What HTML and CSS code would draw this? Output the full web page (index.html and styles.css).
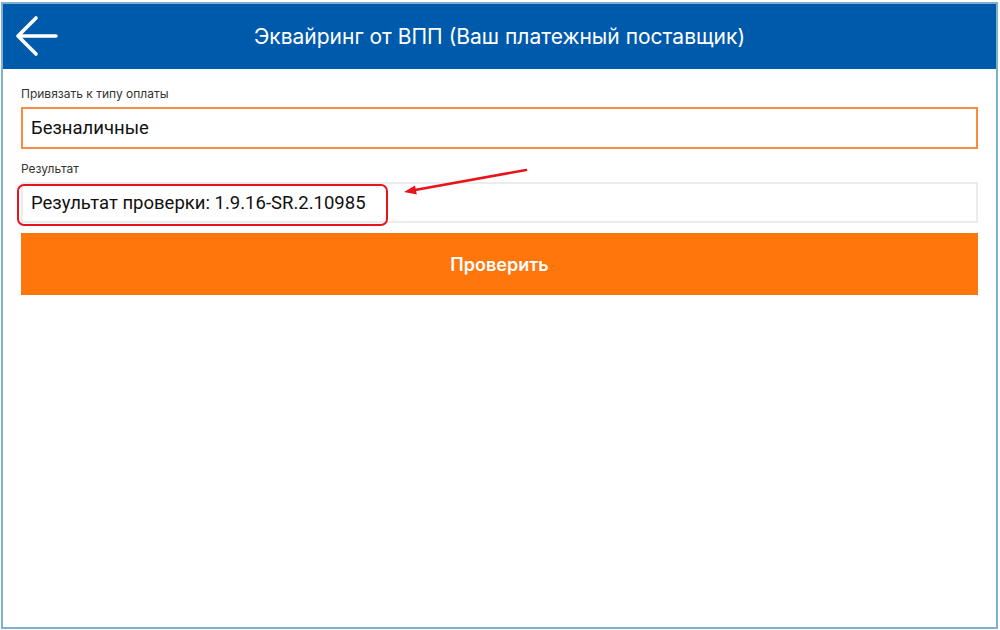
FILE: index.html
```html
<!DOCTYPE html>
<html lang="ru">
<head>
    <meta charset="UTF-8">
    <meta name="viewport" content="width=device-width, initial-scale=1.0">
    <title>Эквайринг от ВПП</title>
    <link rel="stylesheet" href="styles.css">
</head>
<body>

<div class="screen">
    <header class="topbar">
        <button class="back-btn" aria-label="Назад">
            <svg width="44" height="44" viewBox="0 0 44 44">
                <path d="M41 21H4M21 3L3 21L21 39" fill="none" stroke="#ffffff" stroke-width="3.6" stroke-linecap="round" stroke-linejoin="round"/>
            </svg>
        </button>
        <h1 class="topbar-title">Эквайринг от ВПП (Ваш платежный поставщик)</h1>
    </header>

    <main class="content">
        <label class="field-label" for="payType">Привязать к типу оплаты</label>
        <div class="field field-active" id="payType">Безналичные</div>

        <label class="field-label field-label-second" for="result">Результат</label>
        <div class="result-wrap">
            <div class="field field-plain" id="result">Результат проверки: 1.9.16-SR.2.10985</div>

            <!-- annotation over the result -->
            <div class="mark-box"></div>
            <svg class="mark-arrow" width="135" height="32" viewBox="0 0 135 32">
                <line x1="126" y1="4" x2="15" y2="24" stroke="#e8141c" stroke-width="2.5" stroke-linecap="round"/>
                <polygon points="4,26 16.8,28.4 15,19.4" fill="#e8141c"/>
            </svg>
        </div>

        <button class="check-btn">Проверить</button>
    </main>
</div>

</body>
</html>
```

FILE: styles.css
```css
/* Base Styling */
* {
    box-sizing: border-box;
    margin: 0;
    padding: 0;
}
body {
    font-family: Roboto, "Liberation Sans", sans-serif;
    background-color: #ffffff;
}

/* Device Frame */
.screen {
    width: 997px;
    height: 627px;
    margin: 2px 0 0 1px;
    border: 2px solid #7fb0cf;
    background-color: #ffffff;
}

/* Top Bar */
.topbar {
    height: 65px;
    background-color: #005aab;
    display: flex;
    align-items: center;
    position: relative;
}
.back-btn {
    background: none;
    border: none;
    width: 44px;
    height: 44px;
    margin-left: 12px;
    display: flex;
    cursor: pointer;
}
.topbar-title {
    position: absolute;
    left: 0;
    right: 0;
    text-align: center;
    pointer-events: none;
    font-family: Inter, "Noto Sans", sans-serif;
    font-weight: 400;
    font-size: 21px;
    color: #ffffff;
}

/* Form */
.content {
    padding: 17px 18px 0 18px;
    display: flex;
    flex-direction: column;
}
.field-label {
    font-family: Inter, "Noto Sans", sans-serif;
    font-size: 12px;
    line-height: 16px;
    color: #333333;
    margin-bottom: 5px;
}
.field-label-second {
    margin-top: 12px;
}
.field {
    display: flex;
    align-items: center;
    padding-left: 8px;
    font-size: 18.5px;
    color: #111111;
}
.field-active {
    height: 42px;
    border: 2px solid #f68b41;
}
.field-plain {
    height: 41px;
    border: 2px solid #ececec;
}

/* Annotation */
.result-wrap {
    position: relative;
}
.mark-box {
    position: absolute;
    left: -4px;
    top: 2px;
    width: 371px;
    height: 42px;
    border: 2.5px solid #e8141c;
    border-radius: 7px;
}
.mark-arrow {
    position: absolute;
    left: 379px;
    top: -16px;
}

/* Check Button */
.check-btn {
    margin-top: 10px;
    height: 62px;
    border: none;
    background-color: #ff760d;
    color: #ffffff;
    font-family: Inter, "Noto Sans", sans-serif;
    font-weight: 600;
    font-size: 18px;
    cursor: pointer;
}
```
